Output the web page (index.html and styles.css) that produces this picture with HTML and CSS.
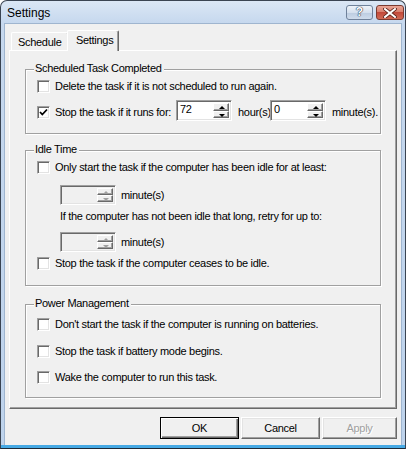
FILE: index.html
```html
<!DOCTYPE html>
<html>
<head>
<meta charset="utf-8">
<link rel="stylesheet" href="styles.css">
</head>
<body>
<div class="window">
  <div class="titlebar">
    <span class="title">Settings</span>
    <div class="tbtns">
      <div class="tbtn help">?</div>
      <div class="tbtn close">
        <svg width="14" height="10" viewBox="0 0 14 10"><path d="M2 1 L12 9 M12 1 L2 9" stroke="#5a2018" stroke-width="3.6" stroke-linecap="square"/><path d="M2 1 L12 9 M12 1 L2 9" stroke="#fff" stroke-width="2" stroke-linecap="square"/></svg>
      </div>
    </div>
  </div>
  <div class="client">
    <div class="tabs">
      <div class="tab">Schedule</div>
      <div class="tab active">Settings</div>
    </div>
    <div class="panel">
      <div class="group g1">
        <span class="legend">Scheduled Task Completed</span>
        <div class="row r1"><span class="cb"></span><span>Delete the task if it is not scheduled to run again.</span></div>
        <div class="row r2">
          <span class="cb checked"><svg width="9" height="9" viewBox="0 0 9 9"><path d="M1 4 L3.3 6.5 L8 1.5" fill="none" stroke="#000" stroke-width="1.8"/></svg></span>
          <span class="lbl lbl-runs">Stop the task if it runs for:</span>
          <div class="spin"><span class="val">72</span><div class="arrows"><span class="arr up"></span><span class="arr dn"></span></div></div>
          <span class="lbl lbl-hours">hour(s)</span>
          <div class="spin"><span class="val">0</span><div class="arrows"><span class="arr up"></span><span class="arr dn"></span></div></div>
          <span class="lbl lbl-min">minute(s).</span>
        </div>
      </div>
      <div class="group g2">
        <span class="legend">Idle Time</span>
        <div class="row i1"><span class="cb"></span><span>Only start the task if the computer has been idle for at least:</span></div>
        <div class="row ind i2">
          <div class="spin disabled"><span class="val"></span><div class="arrows"><span class="arr up"></span><span class="arr dn"></span></div></div>
          <span class="lbl lbl-min2">minute(s)</span>
        </div>
        <div class="row ind i3"><span>If the computer has not been idle that long, retry for up to:</span></div>
        <div class="row ind i4">
          <div class="spin disabled"><span class="val"></span><div class="arrows"><span class="arr up"></span><span class="arr dn"></span></div></div>
          <span class="lbl lbl-min2">minute(s)</span>
        </div>
        <div class="row i5"><span class="cb"></span><span>Stop the task if the computer ceases to be idle.</span></div>
      </div>
      <div class="group g3">
        <span class="legend">Power Management</span>
        <div class="row p1"><span class="cb"></span><span>Don't start the task if the computer is running on batteries.</span></div>
        <div class="row p2"><span class="cb"></span><span>Stop the task if battery mode begins.</span></div>
        <div class="row p3"><span class="cb"></span><span>Wake the computer to run this task.</span></div>
      </div>
    </div>
    <div class="buttons">
      <div class="btn default">OK</div>
      <div class="btn">Cancel</div>
      <div class="btn apply disabled">Apply</div>
    </div>
  </div>
</div>
</body>
</html>
```
FILE: styles.css
```css
* { box-sizing: border-box; }
html, body { margin: 0; padding: 0; }
body {
  width: 406px;
  height: 449px;
  background: #ffffff;
  font-family: "Liberation Sans", Arial, sans-serif;
  font-size: 11px;
  letter-spacing: -0.3px;
  color: #000;
  overflow: hidden;
}
.window {
  width: 406px;
  height: 449px;
  border: 1px solid #3a4452;
  border-bottom-color: #1e2a36;
  border-radius: 7px 7px 0 0;
  background: linear-gradient(#dbe7f5 0, #c6d8ee 22px, #bed3ec 100%);
  padding: 0 3px 3px;
  display: flex;
  flex-direction: column;
  box-shadow: inset 0 -3px 0 #46a9e4;
}
.titlebar {
  height: 22px;
  flex: 0 0 22px;
  display: flex;
  align-items: center;
  justify-content: space-between;
  padding-left: 3px;
}
.title {
  font-size: 12px;
  letter-spacing: 0;
  color: #000;
  margin-top: 1px;
}
.tbtns {
  display: flex;
  gap: 3px;
  margin-top: 1px;
  margin-right: -2px;
}
.tbtn {
  height: 15px;
  border-radius: 3px;
  display: flex;
  align-items: center;
  justify-content: center;
}
.help {
  width: 27px;
  border: 1px solid #6f819a;
  background: linear-gradient(#eef3f9 0, #d5e0ee 50%, #bccce0 51%, #cfdcec 100%);
  color: #fff;
  font-weight: bold;
  font-size: 12px;
  letter-spacing: 0;
  text-shadow: 0 0 1px #2a3a52, 0 0 1px #2a3a52, 0 0 1px #2a3a52;
  line-height: 13px;
}
.close {
  width: 28px;
  border: 1px solid #7a3a30;
  background: linear-gradient(#e9a596 0, #d8806e 45%, #c2493a 50%, #d16a55 100%);
}
.client {
  flex: 1;
  background: #f0f0f0;
  border: 1px solid #9fb5cf;
  border-bottom: none;
  padding: 6px 4px 0 4px;
  display: flex;
  flex-direction: column;
}
.tabs {
  display: flex;
  align-items: flex-end;
  height: 20px;
  padding-left: 2px;
  position: relative;
  z-index: 1;
}
.tab {
  height: 18px;
  padding: 0 5px 0 6px;
  border: 1px solid;
  border-color: #fff #696969 transparent #fff;
  border-bottom: none;
  border-radius: 2px 2px 0 0;
  display: flex;
  align-items: center;
  padding-top: 1px;
  background: #f0f0f0;
  width: 57px;
}
.tab.active {
  height: 21px;
  width: 52px;
  margin-left: -1px;
  margin-bottom: -1px;
  padding: 0 6px 2px 8px;
  box-shadow: inset -1px 0 0 #a0a0a0;
}
.panel {
  height: 359px;
  width: 388px;
  border: 1px solid;
  border-color: #fff #696969 #696969 #fff;
  box-shadow: inset -1px -1px 0 #a0a0a0;
  padding: 18px 0 0 15px;
}
.group {
  position: relative;
  width: 356px;
  border: 1px solid #a0a0a0;
  box-shadow: inset 1px 1px 0 #fff, 1px 1px 0 #fff;
  padding-left: 11px;
}
.legend {
  position: absolute;
  top: -8px;
  left: 8px;
  background: #f0f0f0;
  padding: 0 2px 0 1px;
  line-height: 13px;
}
.g1 { height: 65px; padding-top: 10px; }
.g2 { height: 136px; margin-top: 16px; padding-top: 10px; }
.g3 { height: 94px; margin-top: 18px; padding-top: 13px; }
.row {
  display: flex;
  align-items: center;
  height: 13px;
  line-height: 13px;
  white-space: nowrap;
}
.cb {
  width: 13px;
  height: 13px;
  flex: 0 0 13px;
  background: #fff;
  border: 1px solid;
  border-color: #a0a0a0 #fff #fff #a0a0a0;
  box-shadow: inset 1px 1px 0 #696969, inset -1px -1px 0 #e3e3e3;
  margin-right: 5px;
  display: flex;
  align-items: center;
  justify-content: center;
}
.cb svg { display: block; margin-left: 0px; margin-top: 0px; }
.r2 { height: 21px; margin-top: 7px; }
.r2 .cb, .r2 .lbl { margin-top: 3px; }
.lbl-runs { width: 121px; }
.lbl-hours { width: 38px; padding-left: 6px; }
.lbl-min { padding-left: 6px; }
.spin {
  width: 56px;
  height: 21px;
  background: #fff;
  border: 1px solid;
  border-color: #a0a0a0 #fff #fff #a0a0a0;
  box-shadow: inset 1px 1px 0 #696969, inset -1px -1px 0 #e3e3e3;
  display: flex;
  padding: 2px 2px 2px 2px;
}
.spin .val {
  flex: 1;
  padding-left: 1px;
  line-height: 13px;
}
.spin.disabled { background: #f0f0f0; height: 20px; }
.arrows {
  width: 16px;
  display: flex;
  flex-direction: column;
}
.arr {
  flex: 1;
  position: relative;
  background: #f0f0f0;
  border: 1px solid;
  border-color: #fff #696969 #696969 #fff;
  box-shadow: inset -1px -1px 0 #a0a0a0;
}
.arr::after {
  content: "";
  position: absolute;
  left: 5px;
  width: 0;
  height: 0;
  border-left: 3px solid transparent;
  border-right: 3px solid transparent;
}
.arr.up::after { top: 2px; border-bottom: 3px solid #000; }
.arr.dn::after { top: 2px; border-top: 3px solid #000; }
.spin.disabled .arr.up::after { border-bottom-color: #a0a0a0; }
.spin.disabled .arr.dn::after { border-top-color: #a0a0a0; }
.ind { padding-left: 23px; }
.i1 { margin-top: 0; }
.i2 { height: 20px; margin-top: 11px; }
.lbl-min2 { padding-left: 5px; }
.i3 { margin-top: 5px; }
.i4 { height: 20px; margin-top: 9px; }
.i5 { margin-top: 5px; }
.p2 { margin-top: 14px; }
.p3 { margin-top: 13px; }
.buttons {
  display: flex;
  justify-content: flex-end;
  gap: 2px;
  margin-top: 8px;
  padding-right: 0;
  width: 388px;
}
.btn {
  width: 79px;
  height: 22px;
  display: flex;
  align-items: center;
  justify-content: center;
  background: #f0f0f0;
  border: 1px solid;
  border-color: #fff #696969 #696969 #fff;
  box-shadow: inset -1px -1px 0 #a0a0a0, inset 1px 1px 0 #e3e3e3;
}
.btn.default {
  border: 1px solid #000;
  box-shadow: inset 1px 1px 0 #fff, inset -1px -1px 0 #696969, inset -2px -2px 0 #a0a0a0;
}
.btn.apply { width: 75px; }
.btn.disabled { color: #a0a0a0; text-shadow: 1px 1px 0 #fff; }
```
